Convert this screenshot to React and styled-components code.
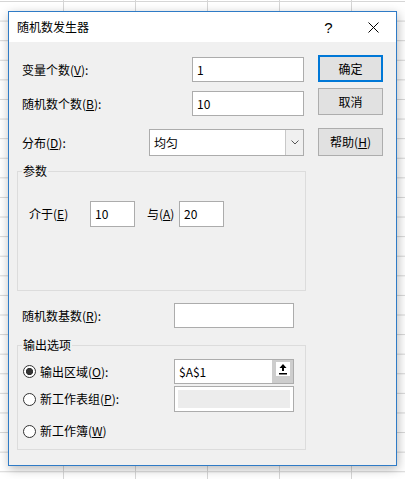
import React from "react";
import styled, { createGlobalStyle } from "styled-components";

const GlobalStyle = createGlobalStyle`
  html, body { margin: 0; padding: 0; }
  body {
    width: 405px;
    height: 479px;
    overflow: hidden;
    background-color: #fff;
    background-image:
      linear-gradient(to right, #d6d6d6 1px, transparent 1px),
      linear-gradient(to bottom, #d6d6d6 1px, transparent 1px);
    background-size: 72px 100%, 100% 19.6px;
    background-position: 63px 0, 0 1px;
    font-family: "Noto Sans CJK SC", "Microsoft YaHei", sans-serif;
    color: #000;
  }
`;

const Page = styled.div`
  padding: 11px 0 0 8px;
`;

const Window = styled.div`
  width: 389px;
  height: 455px;
  box-sizing: border-box;
  border: 1px solid #2f7bc6;
  background: #f0f0f0;
  box-shadow: 1px 3px 10px rgba(0, 0, 0, 0.28);
  display: flex;
  flex-direction: column;
`;

const TitleBar = styled.div`
  height: 30px;
  background: #fff;
  display: flex;
  align-items: center;
`;

const Title = styled.div`
  flex: 1;
  padding-left: 8px;
  font-size: 12px;
  line-height: 16px;
`;

const CaptionButton = styled.div`
  width: 45px;
  height: 30px;
  display: flex;
  align-items: center;
  justify-content: center;
  font-family: "Liberation Sans", sans-serif;
  font-size: 15px;
`;

const Body = styled.div`
  display: grid;
  grid-template-columns: 289px 65px;
  column-gap: 12px;
  padding: 13px 0 0 8px;
`;

const FormColumn = styled.div`
  display: flex;
  flex-direction: column;
  padding-top: 2px;
`;

const ButtonColumn = styled.div`
  display: flex;
  flex-direction: column;
`;

const Row = styled.div`
  display: flex;
  align-items: center;
  height: ${(p) => p.$h || 25}px;
  margin-top: ${(p) => p.$mt || 0}px;
  padding-left: ${(p) => p.$pl || 5}px;
`;

const Label = styled.span`
  width: ${(p) => p.$w}px;
  flex: none;
  font-size: 12px;
  line-height: 16px;
  white-space: nowrap;
`;

const TextBox = styled.div`
  width: ${(p) => p.$w}px;
  height: ${(p) => p.$h || 25}px;
  box-sizing: border-box;
  border: 1px solid #acacac;
  background: #fff;
  display: flex;
  align-items: center;
  padding-left: 4px;
  font-size: 12px;
  line-height: 16px;
  flex: none;
  ${(p) => p.$disabled && "box-shadow: inset 0 0 0 3px #fff; background: #ececec;"}
`;

const RefBox = styled(TextBox)`
  padding-left: 0;
  justify-content: space-between;
  span { padding-left: 4px; }
`;

const RefButton = styled.div`
  width: 21px;
  height: 100%;
  background: #cdcdcd;
  display: flex;
  align-items: center;
  justify-content: center;
  padding-bottom: 5px;
  box-sizing: border-box;
`;

const Combo = styled.div`
  width: 155px;
  height: 27px;
  box-sizing: border-box;
  border: 1px solid #acacac;
  background: #fff;
  display: flex;
  font-size: 12px;
  line-height: 16px;
`;

const ComboText = styled.div`
  flex: 1;
  display: flex;
  align-items: center;
  padding-left: 4px;
`;

const ComboArrow = styled.div`
  width: 17px;
  border-left: 1px solid #c8c8c8;
  background: #f0f0f0;
  display: flex;
  align-items: center;
  justify-content: center;
`;

const Group = styled.fieldset`
  margin: ${(p) => p.$mt}px 0 0;
  padding: 0;
  height: ${(p) => p.$h}px;
  box-sizing: border-box;
  border: 1px solid #dcdcdc;
  min-width: 0;
`;

const Legend = styled.legend`
  margin-left: 4px;
  padding: 0 1px;
  font-size: 12px;
  line-height: 16px;
`;

const ParamRow = styled.div`
  display: flex;
  align-items: center;
  height: 26px;
  margin-top: 22px;
  padding-left: 11px;
`;

const Radio = styled.span`
  width: 13px;
  height: 13px;
  box-sizing: border-box;
  border: 1px solid #333;
  border-radius: 50%;
  flex: none;
  margin-right: 4px;
  background: ${(p) =>
    p.$checked ? "radial-gradient(circle, #333 0 3.3px, #fff 3.9px)" : "#fff"};
`;

const RadioLabel = styled.label`
  width: 151px;
  flex: none;
  display: flex;
  align-items: center;
  font-size: 12px;
  line-height: 16px;
  white-space: nowrap;
`;

const Button = styled.div`
  height: ${(p) => p.$h || 27}px;
  margin-top: ${(p) => p.$mt || 0}px;
  box-sizing: border-box;
  border: ${(p) => (p.$default ? "2px solid #0078d7" : "1px solid #adadad")};
  background: #e1e1e1;
  display: flex;
  align-items: center;
  justify-content: center;
  font-size: 12px;
  line-height: 16px;
`;

const Close = () => (
  <svg width="11" height="11" viewBox="0 0 11 11">
    <path d="M0.5 0.5 L10.5 10.5 M10.5 0.5 L0.5 10.5" stroke="#000" strokeWidth="1" />
  </svg>
);

const Chevron = () => (
  <svg width="8" height="5" viewBox="0 0 8 5">
    <path d="M0.5 0.5 L4 4 L7.5 0.5" stroke="#555" strokeWidth="1" fill="none" />
  </svg>
);

const UploadIcon = () => (
  <svg width="14" height="14" viewBox="0 0 14 14">
    <rect x="0" y="0" width="14" height="14" fill="#fff" />
    <path d="M7 2 L10.5 6 L8 6 L8 9 L6 9 L6 6 L3.5 6 Z" fill="#000" />
    <rect x="3" y="11" width="8" height="1.5" fill="#000" />
  </svg>
);

export default function App() {
  return (
    <>
      <GlobalStyle />
      <Page>
        <Window>
          <TitleBar>
            <Title>随机数发生器</Title>
            <CaptionButton>?</CaptionButton>
            <CaptionButton>
              <Close />
            </CaptionButton>
          </TitleBar>
          <Body>
            <FormColumn>
              <Row>
                <Label $w={170}>
                  变量个数(<u>V</u>):
                </Label>
                <TextBox $w={112}>1</TextBox>
              </Row>
              <Row $mt={9}>
                <Label $w={170}>
                  随机数个数(<u>B</u>):
                </Label>
                <TextBox $w={112}>10</TextBox>
              </Row>
              <Row $mt={13} $h={27}>
                <Label $w={127}>
                  分布(<u>D</u>):
                </Label>
                <Combo>
                  <ComboText>均匀</ComboText>
                  <ComboArrow>
                    <Chevron />
                  </ComboArrow>
                </Combo>
              </Row>
              <Group $mt={7} $h={128}>
                <Legend>参数</Legend>
                <ParamRow>
                  <Label $w={61}>
                    介于(<u>E</u>)
                  </Label>
                  <TextBox $w={45} $h={26}>10</TextBox>
                  <Label $w={32} style={{ marginLeft: 12 }}>
                    与(<u>A</u>)
                  </Label>
                  <TextBox $w={45} $h={26}>20</TextBox>
                </ParamRow>
              </Group>
              <Row $mt={12}>
                <Label $w={152}>
                  随机数基数(<u>R</u>):
                </Label>
                <TextBox $w={120} />
              </Row>
              <Group $mt={9} $h={113}>
                <Legend>输出选项</Legend>
                <Row $mt={6} $h={25}>
                  <RadioLabel>
                    <Radio $checked />
                    输出区域(<u>O</u>):
                  </RadioLabel>
                  <RefBox $w={120}>
                    <span>$A$1</span>
                    <RefButton>
                      <UploadIcon />
                    </RefButton>
                  </RefBox>
                </Row>
                <Row $mt={2} $h={26}>
                  <RadioLabel>
                    <Radio />
                    新工作表组(<u>P</u>):
                  </RadioLabel>
                  <TextBox $w={120} $h={26} $disabled />
                </Row>
                <Row $mt={7} $h={24}>
                  <RadioLabel>
                    <Radio />
                    新工作簿(<u>W</u>)
                  </RadioLabel>
                </Row>
              </Group>
            </FormColumn>
            <ButtonColumn>
              <Button $default>确定</Button>
              <Button $mt={6}>取消</Button>
              <Button $mt={13} $h={28}>
                帮助(<u>H</u>)
              </Button>
            </ButtonColumn>
          </Body>
        </Window>
      </Page>
    </>
  );
}
